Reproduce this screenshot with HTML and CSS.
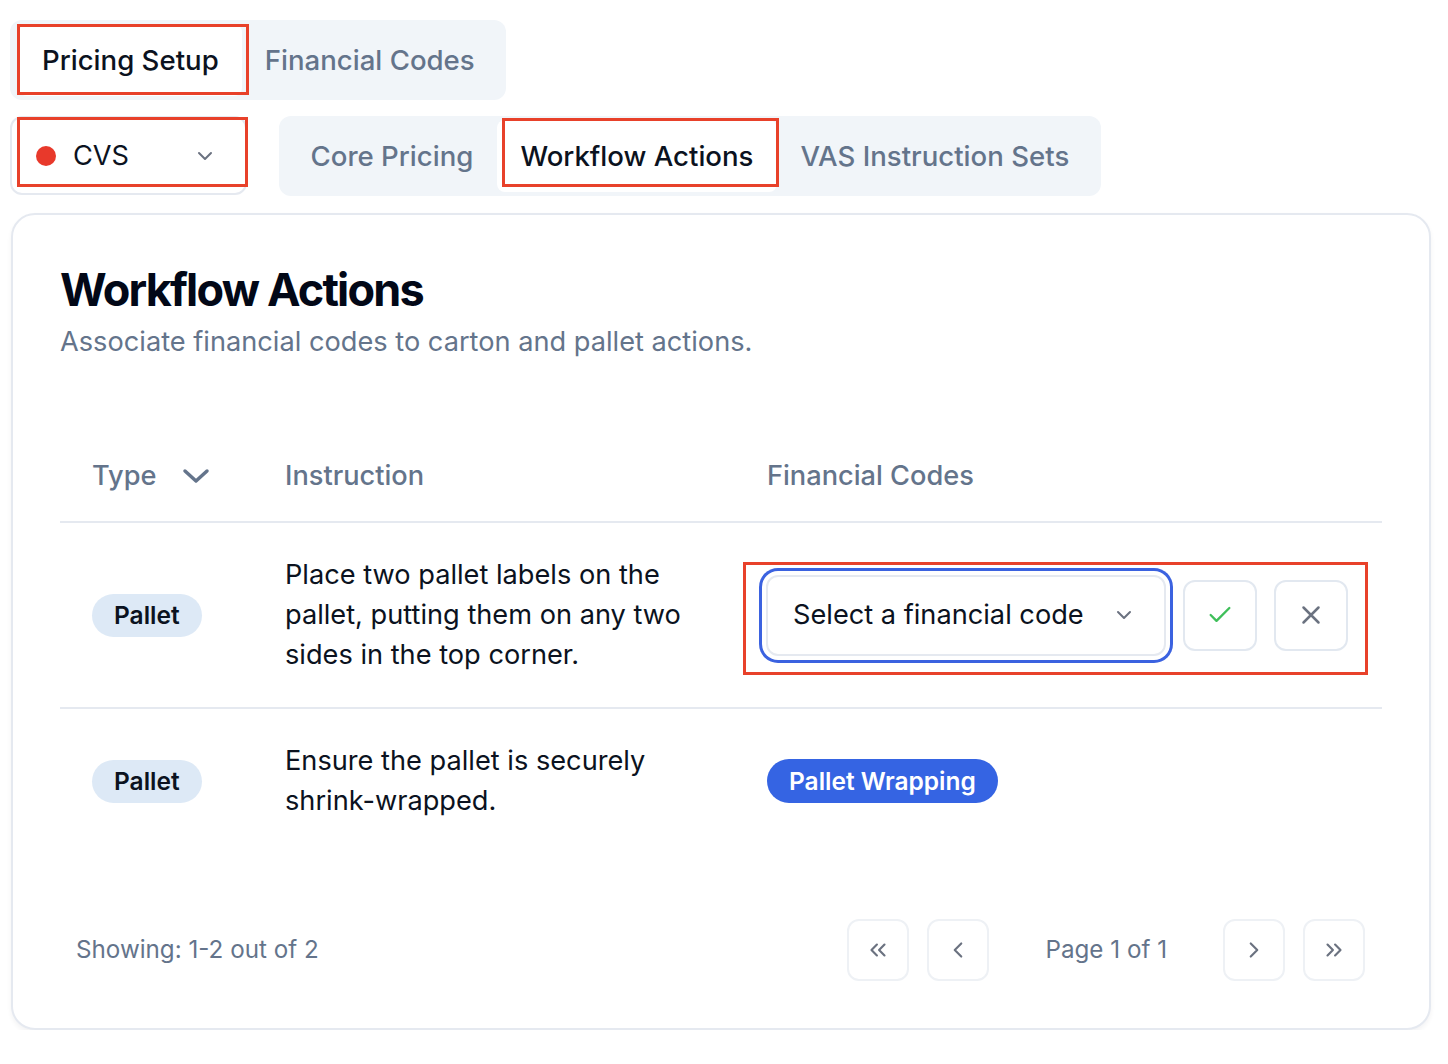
FILE: index.html
```html
<!DOCTYPE html>
<html lang="en">
<head>
<meta charset="utf-8">
<title>Workflow Actions</title>
<link rel="stylesheet" href="styles.css">
</head>
<body>
<div class="page">
  <div class="tabs tabs-top">
    <div class="tab active">Pricing Setup<span class="annot annot-pricing"></span></div>
    <div class="tab">Financial Codes</div>
  </div>

  <div class="row2">
    <div class="client-select">
      <span class="dot"></span>
      <span class="client-name">CVS</span>
      <svg class="chev-sm" viewBox="0 0 24 24" width="24" height="24"><path d="M6 9l6 6 6-6"/></svg>
      <span class="annot annot-cvs"></span>
    </div>
    <div class="tabs tabs-sub">
      <div class="tab">Core Pricing</div>
      <div class="tab active">Workflow Actions<span class="annot annot-wf"></span></div>
      <div class="tab">VAS Instruction Sets</div>
    </div>
  </div>

  <div class="card">
    <h1 class="title">Workflow Actions</h1>
    <p class="subtitle">Associate financial codes to carton and pallet actions.</p>

    <table class="grid">
      <colgroup>
        <col class="c1"><col class="c2"><col class="c3">
      </colgroup>
      <thead>
        <tr>
          <th><span class="th-type">Type <svg class="chev-lg" viewBox="0 0 28 16" width="28" height="16"><path d="M3 3l11 10 11-10"/></svg></span></th>
          <th>Instruction</th>
          <th>Financial Codes</th>
        </tr>
      </thead>
      <tbody>
        <tr>
          <td><span class="pill">Pallet</span></td>
          <td class="instr">Place two pallet labels on the pallet, putting them on any two sides in the top corner.</td>
          <td>
            <div class="edit-group">
              <div class="code-select">
                <span>Select a financial code</span>
                <svg class="chev-sm" viewBox="0 0 24 24" width="24" height="24"><path d="M6 9l6 6 6-6"/></svg>
              </div>
              <button class="icon-btn" type="button"><svg class="ic-check" viewBox="0 0 24 24" width="28" height="28"><path d="M20 6L9 17l-5-5"/></svg></button>
              <button class="icon-btn" type="button"><svg class="ic-x" viewBox="0 0 24 24" width="30" height="30"><path d="M18 6L6 18M6 6l12 12"/></svg></button>
              <span class="annot annot-edit"></span>
            </div>
          </td>
        </tr>
        <tr>
          <td><span class="pill">Pallet</span></td>
          <td class="instr">Ensure the pallet is securely shrink-wrapped.</td>
          <td><span class="code-badge">Pallet Wrapping</span></td>
        </tr>
      </tbody>
    </table>

    <div class="pager">
      <span class="showing">Showing: 1-2 out of 2</span>
      <div class="pager-controls">
        <button class="pg-btn" type="button"><svg viewBox="0 0 24 24" width="26" height="26"><path d="M11 17l-5-5 5-5M18 17l-5-5 5-5"/></svg></button>
        <button class="pg-btn" type="button"><svg viewBox="0 0 24 24" width="26" height="26"><path d="M15 18l-6-6 6-6"/></svg></button>
        <span class="page-label">Page 1 of 1</span>
        <button class="pg-btn" type="button"><svg viewBox="0 0 24 24" width="26" height="26"><path d="M9 18l6-6-6-6"/></svg></button>
        <button class="pg-btn" type="button"><svg viewBox="0 0 24 24" width="26" height="26"><path d="M13 17l5-5-5-5M6 17l5-5-5-5"/></svg></button>
      </div>
    </div>
  </div>
</div>
</body>
</html>
```

FILE: styles.css
```css
* { box-sizing: border-box; }
html, body { margin: 0; padding: 0; background: #ffffff; }
body {
  font-family: Inter, "Noto Sans", "Liberation Sans", sans-serif;
  color: #0b1220;
  font-size: 27.2px;
  line-height: 40px;
}
.page {
  padding: 20px 17px 0 10px;
}

/* Tabs */
.tabs {
  display: inline-flex;
  background: #f1f5f9;
  border-radius: 12px;
  padding: 4px 8px;
  height: 80px;
}
.tab {
  position: relative;
  display: flex;
  align-items: center;
  padding: 0 23.5px;
  height: 72px;
  color: #64748b;
  font-size: 27.6px;
  font-weight: 500;
  border-radius: 8px;
  white-space: nowrap;
}
.tabs-top .tab { padding: 0 23px; }
.tabs-top .tab.active { margin-left: 1px; }
.tab.active {
  background: #ffffff;
  color: #0b1220;
}

.row2 {
  display: flex;
  align-items: flex-start;
  gap: 32px;
  margin-top: 16px;
}

.client-select {
  position: relative;
  display: flex;
  align-items: center;
  width: 237px;
  height: 79px;
  padding: 0 28px 0 24px;
  border: 2px solid #e5e9f0;
  border-radius: 12px;
  background: #fff;
}
.client-select .dot {
  width: 20px;
  height: 20px;
  border-radius: 50%;
  background: #e8392b;
  margin-right: 17px;
}
.client-select .client-name {
  flex: 1;
  color: #0b1220;
}

.chev-sm {
  fill: none;
  stroke: #6b7280;
  stroke-width: 2;
  stroke-linecap: round;
  stroke-linejoin: round;
  flex: none;
}

/* annotation boxes */
.annot {
  position: absolute;
  border: 3px solid #e8412a;
  pointer-events: none;
}
.annot-pricing { top: 0; bottom: 1px; left: -2px; right: -7px; }
.annot-cvs { top: -1px; left: 5px; right: -3px; bottom: 6px; }
.annot-wf { top: -2px; left: 5px; right: -2px; bottom: 5px; }
.annot-edit { top: -13px; left: -23px; right: -18px; bottom: -19px; }

/* Card */
.card {
  margin-top: 17px;
  margin-left: 1px;
  border: 2px solid #e5e9f0;
  border-radius: 24px;
  padding: 47px;
  box-shadow: 0 3px 5px rgba(15, 23, 42, 0.05);
  background: #fff;
}
.title {
  margin: 0;
  font-size: 45px;
  line-height: 56px;
  font-weight: 700;
  letter-spacing: -1.8px;
  color: #020817;
}
.subtitle {
  margin: 4px 0 0 0;
  color: #64748b;
  line-height: 40px;
}

/* Table */
.grid {
  width: 100%;
  margin-top: 68px;
  border-collapse: collapse;
}
.c1 { width: 193px; }
.c2 { width: 482px; }
th {
  text-align: left;
  font-weight: 500;
  color: #64748b;
  height: 92px;
  padding: 0 32px;
  border-bottom: 2px solid #e5e9f0;
  vertical-align: middle;
}
.th-type {
  display: inline-flex;
  align-items: center;
  gap: 26px;
}
.chev-lg {
  fill: none;
  stroke: #64748b;
  stroke-width: 3.5;
  stroke-linecap: round;
  stroke-linejoin: round;
}
td {
  padding: 32px;
  vertical-align: middle;
  color: #0b1220;
}
tbody tr:first-child td { border-bottom: 2px solid #e5e9f0; }
.pill {
  display: inline-flex;
  align-items: center;
  height: 43px;
  padding: 0 22px;
  border-radius: 22px;
  background: #dde9f6;
  color: #0b1220;
  font-size: 24.5px;
  font-weight: 600;
}
.code-badge {
  display: inline-flex;
  align-items: center;
  height: 44px;
  padding: 0 22px;
  border-radius: 22px;
  background: #3564e3;
  color: #ffffff;
  font-size: 24.5px;
  font-weight: 600;
}

.edit-group {
  position: relative;
  display: flex;
  align-items: center;
  gap: 17px;
  margin-left: -1px;
}
.code-select {
  display: flex;
  align-items: center;
  justify-content: space-between;
  width: 400px;
  height: 81px;
  padding: 0 28px 0 25px;
  border: 2px solid #e5e9f0;
  border-radius: 12px;
  background: #fff;
  box-shadow: 0 0 0 4px #ffffff, 0 0 0 7px #3b62e0;
  color: #0b1220;
}
.icon-btn {
  display: flex;
  align-items: center;
  justify-content: center;
  width: 74px;
  height: 71px;
  padding: 0;
  border: 2px solid #e2e8f0;
  border-radius: 12px;
  background: #fff;
}
.ic-check {
  fill: none;
  stroke: #3fbf5a;
  stroke-width: 2;
  stroke-linecap: round;
  stroke-linejoin: round;
}
.ic-x {
  fill: none;
  stroke: #6b7280;
  stroke-width: 2;
  stroke-linecap: round;
  stroke-linejoin: round;
}

/* Pager */
.pager {
  display: flex;
  align-items: center;
  justify-content: space-between;
  margin-top: 66px;
  padding: 0 17px 0 16px;
  height: 62px;
  font-size: 24.2px;
}
.showing { color: #64748b; }
.pager-controls {
  display: flex;
  align-items: center;
  gap: 18px;
}
.page-label {
  color: #64748b;
  margin: 0 38px;
}
.pg-btn {
  display: flex;
  align-items: center;
  justify-content: center;
  width: 62px;
  height: 62px;
  padding: 0;
  border: 2px solid #eef1f5;
  border-radius: 12px;
  background: #fff;
}
.pg-btn svg {
  fill: none;
  stroke: #6b7280;
  stroke-width: 2;
  stroke-linecap: round;
  stroke-linejoin: round;
}
```
